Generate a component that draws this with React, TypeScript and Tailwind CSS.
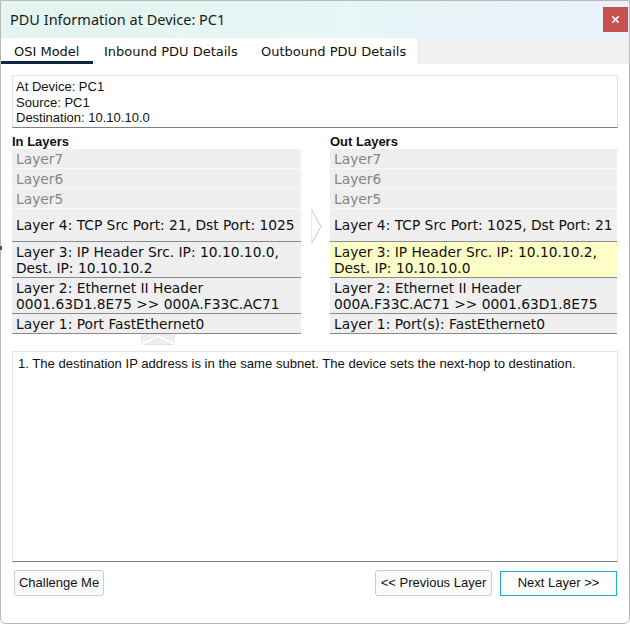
import { X } from 'lucide-react';

type Row = { text: string[]; h: string; muted?: boolean; dark?: boolean; hl?: boolean };

const inRows: Row[] = [
  { text: ['Layer7'], h: 'h-[20px]', muted: true },
  { text: ['Layer6'], h: 'h-[20px]', muted: true },
  { text: ['Layer5'], h: 'h-[20px]', muted: true },
  { text: ['Layer 4: TCP Src Port: 21, Dst Port: 1025'], h: 'h-[33px]', dark: true },
  { text: ['Layer 3: IP Header Src. IP: 10.10.10.0,', 'Dest. IP: 10.10.10.2'], h: 'h-[36px]', dark: true },
  { text: ['Layer 2: Ethernet II Header', '0001.63D1.8E75 >> 000A.F33C.AC71'], h: 'h-[36px]', dark: true },
  { text: ['Layer 1: Port FastEthernet0'], h: 'h-[20px]', dark: true },
];

const outRows: Row[] = [
  { text: ['Layer7'], h: 'h-[20px]', muted: true },
  { text: ['Layer6'], h: 'h-[20px]', muted: true },
  { text: ['Layer5'], h: 'h-[20px]', muted: true },
  { text: ['Layer 4: TCP Src Port: 1025, Dst Port: 21'], h: 'h-[33px]', dark: true },
  { text: ['Layer 3: IP Header Src. IP: 10.10.10.2,', 'Dest. IP: 10.10.10.0'], h: 'h-[36px]', dark: true, hl: true },
  { text: ['Layer 2: Ethernet II Header', '000A.F33C.AC71 >> 0001.63D1.8E75'], h: 'h-[36px]', dark: true },
  { text: ['Layer 1: Port(s): FastEthernet0'], h: 'h-[20px]', dark: true },
];

function LayerStack({ rows }: { rows: Row[] }) {
  return (
    <div className="flex flex-col font-['DejaVu_Sans',sans-serif] text-[13.8px] leading-[16px]">
      {rows.map((r, i) => (
        <div
          key={i}
          className={`${r.h} flex flex-col justify-center pl-[4px] ${
            r.dark ? 'border-b border-[#8a8a8a]' : 'border-b border-[#f8f8f8]'
          } ${r.hl ? 'bg-[#fdfdc6]' : 'bg-[#efefef]'} ${r.muted ? 'text-[#858585]' : 'text-[#111]'}`}
        >
          {r.text.map((t, j) => (
            <div key={j} className="whitespace-nowrap">
              {t}
            </div>
          ))}
        </div>
      ))}
    </div>
  );
}

export default function App() {
  return (
    <div className="relative w-[630px] h-[625px] bg-white">
      <div className="flex flex-col h-[624px] border border-[#b9b9b9] rounded-b-[6px] overflow-hidden bg-white">
        {/* title bar */}
        <div className="h-[37px] flex items-center justify-between pl-[9px] pr-[1px] bg-gradient-to-r from-[#e3f5ee] via-[#e6f6f6] to-[#ebf1fb]">
          <span className="font-['Noto_Sans',sans-serif] text-[14.5px] text-[#1a1a1a]">
            PDU Information at Device: PC1
          </span>
          <div className="w-[25px] h-[25px] bg-[#c75050] flex items-center justify-center">
            <X size={11} strokeWidth={3.5} color="#ffffff" />
          </div>
        </div>

        {/* tabs */}
        <div className="h-[26px] flex font-['DejaVu_Sans',sans-serif] text-[13px] text-[#111]">
          <div className="flex bg-white">
            <div className="w-[92px] pl-[13px] pt-[4px] border-b-[3px] border-[#0f2747]">OSI Model</div>
            <div className="pl-[11px] pt-[4px] w-[156px]">Inbound PDU Details</div>
            <div className="pl-[12px] pt-[4px] w-[168px]">Outbound PDU Details</div>
          </div>
          <div className="flex-1 bg-[#f0f0f0]" />
        </div>

        <div className="flex flex-col px-[11px] pt-[11px]">
          {/* info box */}
          <div className="h-[53px] border border-[#e3e3e3] border-b-[#7f7f7f] pl-[3px] pt-[3px] font-['Liberation_Sans',sans-serif] text-[13px] leading-[15.5px] text-[#111]">
            <div>At Device: PC1</div>
            <div>Source: PC1</div>
            <div>Destination: 10.10.10.0</div>
          </div>

          {/* layer columns */}
          <div className="flex mt-[6px]">
            <div className="w-[289px] flex flex-col">
              <div className="h-[15px] font-['Liberation_Sans',sans-serif] font-bold text-[13px] leading-[15px] text-[#111]">
                In Layers
              </div>
              <LayerStack rows={inRows} />
            </div>
            <div className="w-[29px] pt-[75px] pl-[10px]">
              <svg width="11" height="35" viewBox="0 0 11 35">
                <path d="M0.5 0.5 L10 17.5 L0.5 34.5" fill="none" stroke="#d6d6d6" strokeWidth="1.3" />
                <path d="M0.5 0.5 L0.5 34.5" fill="none" stroke="#ececec" strokeWidth="1" />
              </svg>
            </div>
            <div className="w-[287px] flex flex-col">
              <div className="h-[15px] font-['Liberation_Sans',sans-serif] font-bold text-[13px] leading-[15px] text-[#111]">
                Out Layers
              </div>
              <LayerStack rows={outRows} />
            </div>
          </div>

          {/* up tab */}
          <div className="h-[17px] pl-[129px]">
            <svg width="34" height="11" viewBox="0 0 34 11">
              <rect x="0" y="0" width="34" height="11" fill="#eeeeee" />
              <path d="M1 10 L17 2 L33 10" fill="none" stroke="#ffffff" strokeWidth="1.5" />
              <path d="M3 10.5 L31 10.5" stroke="#e2e2e2" strokeWidth="1" />
            </svg>
          </div>

          {/* description */}
          <div className="h-[211px] border border-[#e6e6e6] border-b-[#7f7f7f] pl-[5px] pt-[4px] font-['Liberation_Sans',sans-serif] text-[13.1px] leading-[15px] text-[#111]">
            1. The destination IP address is in the same subnet. The device sets the next-hop to destination.
          </div>

          {/* buttons */}
          <div className="flex items-center mt-[8px] pl-[2px] font-['Liberation_Sans',sans-serif] text-[13px] text-[#111]">
            <button className="w-[90px] h-[26px] rounded-[3px] border border-[#cdcdcd] bg-[#fbfbfb]">
              Challenge Me
            </button>
            <div className="flex-1" />
            <button className="w-[117px] h-[26px] rounded-[3px] border border-[#cdcdcd] bg-[#fbfbfb]">
              {'<< Previous Layer'}
            </button>
            <button className="ml-[8px] mr-[1px] w-[117px] h-[25px] border border-[#14b4e4] bg-white">
              {'Next Layer >>'}
            </button>
          </div>
        </div>
      </div>
      <div className="absolute left-0 top-[246px] w-[2px] h-[4px] bg-[#555]" />
    </div>
  );
}
